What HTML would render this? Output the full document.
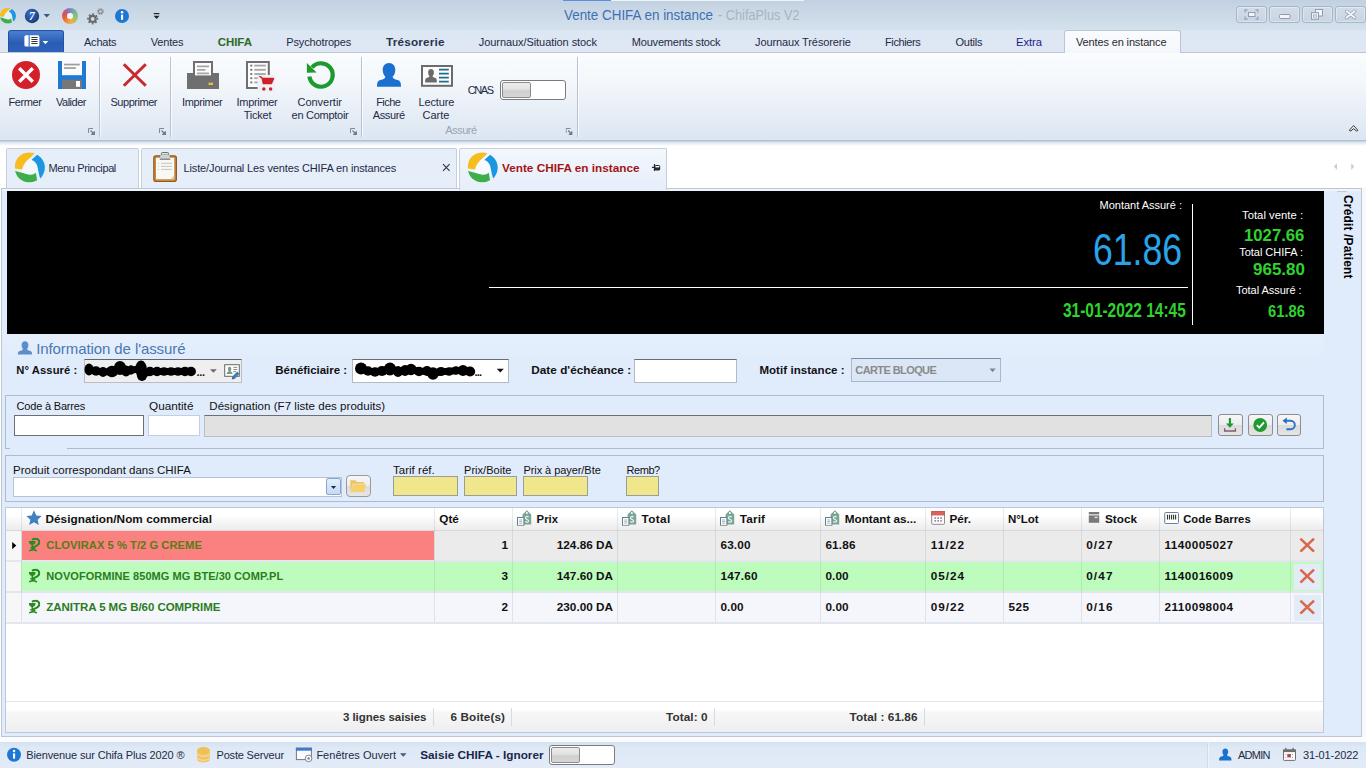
<!DOCTYPE html>
<html lang="fr"><head><meta charset="utf-8"><title>Vente CHIFA en instance - ChifaPlus V2</title>
<style>
html,body{margin:0;padding:0;}
body{width:1366px;height:768px;overflow:hidden;background:#fff;font-family:"Liberation Sans",sans-serif;}
#app{position:relative;width:1366px;height:768px;overflow:hidden;}
#app div{position:absolute;box-sizing:border-box;}
.t{position:absolute;white-space:nowrap;}
#ic{position:absolute;left:0;top:0;}

</style></head>
<body>
<div id="app">
<div class="" style="left:0px;top:0px;width:1366px;height:53px;background:linear-gradient(#c2d1e1 0,#cad8e6 12px,#d1dfeb 25px,#d3e0ec 29px,#dde6f3 31px,#dfe7f4 53px);"></div>
<div class="" style="left:563px;top:0px;width:241px;height:1px;background:#eef2f8;"></div>
<div class="" style="left:563px;top:0px;width:48px;height:1px;background:#5b8fd6;"></div>
<span class="t" style="left:564px;top:7px;font-size:14.75px;line-height:16px;color:#3f6fb3;transform-origin:0 0;transform:scaleX(0.909);">Vente CHIFA en instance</span>
<span class="t" style="left:717.5px;top:7px;font-size:14.75px;line-height:16px;color:#aab3c0;transform-origin:0 0;transform:scaleX(0.865);">- ChifaPlus V2</span>
<div class="" style="left:1236px;top:6px;width:31px;height:17px;border:1px solid #a7b5c9;border-radius:3px;background:linear-gradient(#d3dce9,#c9d4e3);box-shadow:inset 0 0 0 1px rgba(255,255,255,.35);"></div>
<div class="" style="left:1269px;top:6px;width:31px;height:17px;border:1px solid #a7b5c9;border-radius:3px;background:linear-gradient(#d3dce9,#c9d4e3);box-shadow:inset 0 0 0 1px rgba(255,255,255,.35);"></div>
<div class="" style="left:1302px;top:6px;width:31px;height:17px;border:1px solid #a7b5c9;border-radius:3px;background:linear-gradient(#d3dce9,#c9d4e3);box-shadow:inset 0 0 0 1px rgba(255,255,255,.35);"></div>
<div class="" style="left:1335px;top:6px;width:31px;height:17px;border:1px solid #a7b5c9;border-radius:3px;background:linear-gradient(#d3dce9,#c9d4e3);box-shadow:inset 0 0 0 1px rgba(255,255,255,.35);"></div>
<div class="" style="left:8px;top:30px;width:56px;height:23px;border-radius:3px 3px 0 0;background:linear-gradient(#4a7fd0,#2a5cb4 55%,#2f63bb);border:1px solid #2452a3;border-bottom:none;"></div>
<div class="" style="left:1064px;top:30px;width:117px;height:24px;border:1px solid #b9c6d8;border-bottom:none;border-radius:3px 3px 0 0;background:linear-gradient(#f9fbfe,#f4f7fc);"></div>
<span class="t" style="left:84.0px;top:36px;font-size:11.0px;line-height:12px;color:#1e2b45;letter-spacing:-0.23px;">Achats</span>
<span class="t" style="left:150.7px;top:36px;font-size:11.0px;line-height:12px;color:#1e2b45;letter-spacing:-0.17px;">Ventes</span>
<span class="t" style="left:217.8px;top:36px;font-size:11.5px;line-height:12px;color:#2c6b1c;font-weight:bold;letter-spacing:-0.08px;">CHIFA</span>
<span class="t" style="left:286.3px;top:36px;font-size:11.0px;line-height:12px;color:#1e2b45;letter-spacing:-0.15px;">Psychotropes</span>
<span class="t" style="left:386.0px;top:35px;font-size:11.75px;line-height:13px;color:#26344f;font-weight:bold;letter-spacing:0.19px;">Trésorerie</span>
<span class="t" style="left:478.8px;top:36px;font-size:11.0px;line-height:12px;color:#1e2b45;letter-spacing:-0.07px;">Journaux/Situation stock</span>
<span class="t" style="left:631.8px;top:36px;font-size:11.0px;line-height:12px;color:#1e2b45;letter-spacing:-0.2px;">Mouvements stock</span>
<span class="t" style="left:755.0px;top:36px;font-size:11.0px;line-height:12px;color:#1e2b45;letter-spacing:-0.11px;">Journaux Trésorerie</span>
<span class="t" style="left:885.0px;top:36px;font-size:11.0px;line-height:12px;color:#1e2b45;letter-spacing:-0.39px;">Fichiers</span>
<span class="t" style="left:955.5px;top:36px;font-size:11.0px;line-height:12px;color:#1e2b45;letter-spacing:-0.22px;">Outils</span>
<span class="t" style="left:1016.0px;top:36px;font-size:11.25px;line-height:12px;color:#1c1c8c;letter-spacing:-0.06px;">Extra</span>
<span class="t" style="left:1076.0px;top:36px;font-size:11.0px;line-height:12px;color:#2b2b2b;letter-spacing:-0.14px;">Ventes en instance</span>
<div class="" style="left:0px;top:53px;width:1366px;height:88px;background:linear-gradient(#fafcfe 0,#f3f7fb 30px,#e6edf6 62px,#dbe5f1 88px);"></div>
<div class="" style="left:0px;top:52px;width:1064px;height:1px;background:#b9c6d8;"></div>
<div class="" style="left:1181px;top:52px;width:185px;height:1px;background:#b9c6d8;"></div>
<div class="" style="left:0px;top:140px;width:1366px;height:1px;background:#b3c2d6;"></div>
<div class="" style="left:0px;top:141px;width:1366px;height:1px;background:#c3d0e0;"></div>
<div class="" style="left:0px;top:142px;width:1366px;height:4px;background:linear-gradient(#dbe4ef,#ffffff);"></div>
<div class="" style="left:99px;top:57px;width:1px;height:80px;background:#b7c3d4;"></div>
<div class="" style="left:100px;top:57px;width:1px;height:80px;background:rgba(255,255,255,.7);"></div>
<div class="" style="left:170px;top:57px;width:1px;height:80px;background:#b7c3d4;"></div>
<div class="" style="left:171px;top:57px;width:1px;height:80px;background:rgba(255,255,255,.7);"></div>
<div class="" style="left:361px;top:57px;width:1px;height:80px;background:#b7c3d4;"></div>
<div class="" style="left:362px;top:57px;width:1px;height:80px;background:rgba(255,255,255,.7);"></div>
<div class="" style="left:577px;top:57px;width:1px;height:80px;background:#b7c3d4;"></div>
<div class="" style="left:578px;top:57px;width:1px;height:80px;background:rgba(255,255,255,.7);"></div>
<span class="t" style="left:8.5px;top:96px;font-size:11.0px;line-height:12px;color:#1e2b45;letter-spacing:-0.39px;">Fermer</span>
<span class="t" style="left:56.0px;top:96px;font-size:11.0px;line-height:12px;color:#1e2b45;letter-spacing:-0.49px;">Valider</span>
<span class="t" style="left:110.5px;top:96px;font-size:11.0px;line-height:12px;color:#1e2b45;letter-spacing:-0.47px;">Supprimer</span>
<span class="t" style="left:182.0px;top:96px;font-size:11.0px;line-height:12px;color:#1e2b45;letter-spacing:-0.38px;">Imprimer</span>
<span class="t" style="left:236.6px;top:96px;font-size:11.0px;line-height:12px;color:#1e2b45;letter-spacing:-0.32px;">Imprimer</span>
<span class="t" style="left:243.8px;top:109px;font-size:11.0px;line-height:12px;color:#1e2b45;letter-spacing:-0.24px;">Ticket</span>
<span class="t" style="left:297.5px;top:96px;font-size:11.0px;line-height:12px;color:#1e2b45;letter-spacing:-0.02px;">Convertir</span>
<span class="t" style="left:291.6px;top:109px;font-size:11.0px;line-height:12px;color:#1e2b45;letter-spacing:-0.28px;">en Comptoir</span>
<span class="t" style="left:376.2px;top:96px;font-size:11.0px;line-height:12px;color:#1e2b45;letter-spacing:-0.54px;">Fiche</span>
<span class="t" style="left:372.8px;top:109px;font-size:11.0px;line-height:12px;color:#1e2b45;letter-spacing:-0.4px;">Assuré</span>
<span class="t" style="left:418.5px;top:96px;font-size:11.0px;line-height:12px;color:#1e2b45;letter-spacing:-0.13px;">Lecture</span>
<span class="t" style="left:422.5px;top:109px;font-size:11.0px;line-height:12px;color:#1e2b45;">Carte</span>
<span class="t" style="left:467.8px;top:84px;font-size:11.0px;line-height:12px;color:#1e2b45;letter-spacing:-1.44px;">CNAS</span>
<span class="t" style="left:445.2px;top:124px;font-size:11.0px;line-height:12px;color:#9aa4b3;letter-spacing:-0.45px;">Assuré</span>
<div class="" style="left:500px;top:80px;width:66px;height:20px;border:1px solid #7b7b7b;border-radius:3px;background:#fff;"></div>
<div class="" style="left:502px;top:82px;width:29px;height:16px;border:1px solid #8c8c8c;border-radius:2px;background:linear-gradient(#ececec,#e2e2e2 45%,#cfcfcf 55%,#d6d6d6);"></div>
<div class="" style="left:6px;top:148px;width:133px;height:41px;border:1px solid #c6ceda;border-bottom:none;border-radius:2px 2px 0 0;background:#e6eef9;"></div>
<div class="" style="left:141px;top:148px;width:316px;height:41px;border:1px solid #c6ceda;border-bottom:none;border-radius:2px 2px 0 0;background:#e6eef9;"></div>
<span class="t" style="left:48.5px;top:162px;font-size:11.0px;line-height:12px;color:#1e2b45;letter-spacing:-0.38px;">Menu Principal</span>
<span class="t" style="left:183.5px;top:162px;font-size:11.0px;line-height:12px;color:#1e2b45;letter-spacing:-0.13px;">Liste/Journal Les ventes CHIFA en instances</span>
<div class="" style="left:1px;top:188px;width:1361px;height:549px;border:1px solid #bec6d2;background:#e0ebfc;"></div>
<div class="" style="left:2px;top:189px;width:1359px;height:2px;background:#f0f5fd;"></div>
<div class="" style="left:1362px;top:188px;width:4px;height:549px;background:#f7f9fd;"></div>
<div class="" style="left:459px;top:148px;width:208px;height:42px;border:1px solid #c6ceda;border-bottom:none;border-radius:2px 2px 0 0;background:linear-gradient(#f3f7fd,#e6eefa);"></div>
<span class="t" style="left:502.0px;top:161px;font-size:11.75px;line-height:13px;color:#a31515;font-weight:bold;letter-spacing:0.01px;">Vente CHIFA en instance</span>
<div class="" style="left:7px;top:191px;width:1317px;height:143px;background:#000;"></div>
<div class="" style="left:489px;top:287px;width:699px;height:1px;background:#fff;"></div>
<div class="" style="left:1192px;top:204px;width:1px;height:121px;background:#fff;"></div>
<span class="t" style="left:1099.6px;top:199px;font-size:11.0px;line-height:12px;color:#fff;letter-spacing:-0.01px;">Montant Assuré :</span>
<span class="t" style="left:1242.0px;top:209px;font-size:11.25px;line-height:12px;color:#fff;letter-spacing:0.03px;">Total vente :</span>
<span class="t" style="left:1239.3px;top:246px;font-size:11.0px;line-height:12px;color:#fff;letter-spacing:-0.04px;">Total CHIFA :</span>
<span class="t" style="left:1236.0px;top:284px;font-size:11.0px;line-height:12px;color:#fff;letter-spacing:-0.03px;">Total Assuré :</span>
<span class="t" style="left:1093px;top:228.1px;font-size:43.65px;line-height:43.65px;color:#2aa4e8;transform-origin:0 0;transform:scaleX(0.815);">61.86</span>
<span class="t" style="left:1062.5px;top:301.2px;font-size:19.90px;line-height:19.90px;color:#2fd22f;font-weight:bold;transform-origin:0 0;transform:scaleX(0.776);">31-01-2022 14:45</span>
<span class="t" style="left:1244px;top:226.5px;font-size:17.18px;line-height:17.18px;color:#2fd22f;font-weight:bold;transform-origin:0 0;transform:scaleX(0.973);">1027.66</span>
<span class="t" style="left:1253.3px;top:261.8px;font-size:16.76px;line-height:16.76px;color:#2fd22f;font-weight:bold;transform-origin:0 0;transform:scaleX(1.015);">965.80</span>
<span class="t" style="left:1267.5px;top:303.5px;font-size:16.76px;line-height:16.76px;color:#2fd22f;font-weight:bold;transform-origin:0 0;transform:scaleX(0.880);">61.86</span>
<span class="t" style="left:1354px;top:195px;font-size:12px;line-height:12px;font-weight:bold;color:#000;letter-spacing:0.15px;transform-origin:0 0;transform:rotate(90deg);">Crédit /Patient</span>
<div class="" style="left:2px;top:334px;width:1322px;height:26px;background:linear-gradient(#e5effc,#e1ecfb);"></div>
<span class="t" style="left:36.2px;top:340px;font-size:15.0px;line-height:17px;color:#4a78b4;letter-spacing:-0.09px;">Information de l&#x27;assuré</span>
<span class="t" style="left:16.3px;top:364px;font-size:11.25px;line-height:12px;color:#111;font-weight:bold;letter-spacing:0.06px;">N° Assuré :</span>
<div class="" style="left:84px;top:359px;width:158px;height:24px;border:1px solid #bdbdbd;border-top-color:#5c6575;background:#efefef;"></div>
<span class="t" style="left:275.3px;top:364px;font-size:11.5px;line-height:12px;color:#111;font-weight:bold;letter-spacing:-0.04px;">Bénéficiaire :</span>
<div class="" style="left:352px;top:359px;width:157px;height:24px;border:1px solid #b3bac5;border-top-color:#666c78;background:#fff;"></div>
<span class="t" style="left:531.3px;top:363px;font-size:11.75px;line-height:13px;color:#111;font-weight:bold;letter-spacing:0.02px;">Date d&#x27;échéance :</span>
<div class="" style="left:634px;top:359px;width:103px;height:24px;border:1px solid #b3bac5;border-top-color:#666c78;background:#fff;"></div>
<span class="t" style="left:759.4px;top:364px;font-size:11.5px;line-height:12px;color:#111;font-weight:bold;letter-spacing:0.06px;">Motif instance :</span>
<div class="" style="left:851px;top:358px;width:150px;height:24px;border:1px solid #a9b8cc;border-top-color:#7f8da3;background:#dbe6f6;"></div>
<span class="t" style="left:855.3px;top:364px;font-size:11.0px;line-height:12px;color:#8a8a8a;font-weight:bold;letter-spacing:-0.59px;">CARTE BLOQUE</span>
<span class="t" style="left:196.5px;top:366px;font-size:11.0px;line-height:12px;color:#111;font-weight:bold;letter-spacing:-0.33px;">...</span>
<span class="t" style="left:474.5px;top:366px;font-size:11.0px;line-height:12px;color:#111;font-weight:bold;letter-spacing:-0.83px;">...</span>
<div class="" style="left:5px;top:395px;width:1319px;height:54px;border:1px solid #aebbcd;"></div>
<div class="" style="left:10px;top:448px;width:57px;height:1px;background:#e0ebfc;"></div>
<span class="t" style="left:16.5px;top:400px;font-size:11.0px;line-height:12px;color:#111;letter-spacing:-0.18px;">Code à Barres</span>
<span class="t" style="left:149.0px;top:399px;font-size:11.75px;line-height:13px;color:#111;">Quantité</span>
<span class="t" style="left:209.3px;top:400px;font-size:11.5px;line-height:12px;color:#111;letter-spacing:0.04px;">Désignation (F7 liste des produits)</span>
<div class="" style="left:14px;top:415px;width:130px;height:21px;border:1px solid #6f6f6f;background:#fff;"></div>
<div class="" style="left:148px;top:415px;width:52px;height:21px;border:1px solid #c3cfe0;background:#fff;"></div>
<div class="" style="left:204px;top:415px;width:1008px;height:22px;border:1px solid #bdbdbd;border-top:1px solid #6f6f6f;background:#e1e1e1;"></div>
<div class="" style="left:1218px;top:414px;width:25px;height:22px;border:1px solid #8e8e8e;border-radius:3px;background:linear-gradient(#f6f6f6,#ededed 50%,#dcdcdc 51%,#e4e4e4);"></div>
<div class="" style="left:1248px;top:414px;width:25px;height:22px;border:1px solid #8e8e8e;border-radius:3px;background:linear-gradient(#f6f6f6,#ededed 50%,#dcdcdc 51%,#e4e4e4);"></div>
<div class="" style="left:1277px;top:414px;width:24px;height:22px;border:1px solid #8e8e8e;border-radius:3px;background:linear-gradient(#f6f6f6,#ededed 50%,#dcdcdc 51%,#e4e4e4);"></div>
<div class="" style="left:5px;top:455px;width:1319px;height:47px;border:1px solid #aebbcd;"></div>
<span class="t" style="left:13.1px;top:464px;font-size:11.5px;line-height:12px;color:#111;letter-spacing:-0.02px;">Produit correspondant dans CHIFA</span>
<div class="" style="left:13px;top:477px;width:329px;height:20px;border:1px solid #b4c3d8;background:#fff;"></div>
<div class="" style="left:326px;top:478px;width:15px;height:17px;border:1px solid #86a6d3;border-radius:2px;background:linear-gradient(#e3eefc,#c5d9f5);"></div>
<div class="" style="left:346px;top:475px;width:25px;height:22px;border:1px solid #9a9a9a;border-radius:4px;background:linear-gradient(#f7f7f7,#ececec 50%,#dcdcdc 51%,#e6e6e6);"></div>
<span class="t" style="left:393.0px;top:464px;font-size:11.5px;line-height:12px;color:#111;letter-spacing:0.02px;">Tarif réf.</span>
<span class="t" style="left:464.0px;top:464px;font-size:11.0px;line-height:12px;color:#111;letter-spacing:0.04px;">Prix/Boite</span>
<span class="t" style="left:523.4px;top:464px;font-size:11.0px;line-height:12px;color:#111;letter-spacing:-0.06px;">Prix à payer/Bte</span>
<span class="t" style="left:626.5px;top:464px;font-size:11.0px;line-height:12px;color:#111;letter-spacing:-0.44px;">Remb?</span>
<div class="" style="left:393px;top:476px;width:65px;height:20px;border:1px solid #9c9c9c;background:#f0e68c;"></div>
<div class="" style="left:464px;top:476px;width:53px;height:20px;border:1px solid #9c9c9c;background:#f0e68c;"></div>
<div class="" style="left:523px;top:476px;width:65px;height:20px;border:1px solid #9c9c9c;background:#f0e68c;"></div>
<div class="" style="left:626px;top:476px;width:33px;height:20px;border:1px solid #9c9c9c;background:#f0e68c;"></div>
<div class="" style="left:5px;top:507px;width:1319px;height:226px;border:1px solid #bdc8d9;background:#fff;"></div>
<div class="" style="left:6px;top:508px;width:1317px;height:23px;background:linear-gradient(#ffffff 30%,#f4f4f4 70%,#ececec);border-bottom:1px solid #d9d9d9;"></div>
<div class="" style="left:6px;top:531px;width:1317px;height:29px;background:#ebebeb;"></div>
<div class="" style="left:22px;top:531px;width:412px;height:29px;background:#fb8181;"></div>
<div class="" style="left:6px;top:562px;width:1317px;height:29px;background:#bdfcbd;"></div>
<div class="" style="left:6px;top:593px;width:1317px;height:29px;background:#f5f5fc;"></div>
<div class="" style="left:6px;top:531px;width:15px;height:91px;background:#f7f7f7;"></div>
<div class="" style="left:6px;top:560px;width:1317px;height:2px;background:#e3e6ee;"></div>
<div class="" style="left:6px;top:591px;width:1317px;height:2px;background:#e3e6ee;"></div>
<div class="" style="left:6px;top:622px;width:1317px;height:2px;background:#e3e6ee;"></div>
<div class="" style="left:21px;top:508px;width:1px;height:114px;background:rgba(150,155,170,.22);"></div>
<div class="" style="left:434px;top:508px;width:1px;height:114px;background:rgba(150,155,170,.22);"></div>
<div class="" style="left:512px;top:508px;width:1px;height:114px;background:rgba(150,155,170,.22);"></div>
<div class="" style="left:617px;top:508px;width:1px;height:114px;background:rgba(150,155,170,.22);"></div>
<div class="" style="left:715px;top:508px;width:1px;height:114px;background:rgba(150,155,170,.22);"></div>
<div class="" style="left:820px;top:508px;width:1px;height:114px;background:rgba(150,155,170,.22);"></div>
<div class="" style="left:925px;top:508px;width:1px;height:114px;background:rgba(150,155,170,.22);"></div>
<div class="" style="left:1003px;top:508px;width:1px;height:114px;background:rgba(150,155,170,.22);"></div>
<div class="" style="left:1081px;top:508px;width:1px;height:114px;background:rgba(150,155,170,.22);"></div>
<div class="" style="left:1159px;top:508px;width:1px;height:114px;background:rgba(150,155,170,.22);"></div>
<div class="" style="left:1290px;top:508px;width:1px;height:114px;background:rgba(150,155,170,.22);"></div>
<div class="" style="left:1294px;top:564px;width:27px;height:26px;background:#e3ebf7;"></div>
<div class="" style="left:1294px;top:595px;width:27px;height:26px;background:#e3ebf7;"></div>
<span class="t" style="left:45.5px;top:512px;font-size:11.75px;line-height:13px;color:#111;font-weight:bold;letter-spacing:0.05px;">Désignation/Nom commercial</span>
<span class="t" style="left:439.3px;top:512px;font-size:11.75px;line-height:13px;color:#111;font-weight:bold;letter-spacing:-0.04px;">Qté</span>
<span class="t" style="left:536.6px;top:513px;font-size:11.25px;line-height:12px;color:#111;font-weight:bold;letter-spacing:0.05px;">Prix</span>
<span class="t" style="left:641.5px;top:512px;font-size:11.75px;line-height:13px;color:#111;font-weight:bold;letter-spacing:0.38px;">Total</span>
<span class="t" style="left:739.7px;top:512px;font-size:11.75px;line-height:13px;color:#111;font-weight:bold;letter-spacing:0.18px;">Tarif</span>
<span class="t" style="left:844.7px;top:512px;font-size:11.75px;line-height:13px;color:#111;font-weight:bold;letter-spacing:-0.01px;">Montant as...</span>
<span class="t" style="left:949.4px;top:512px;font-size:11.75px;line-height:13px;color:#111;font-weight:bold;letter-spacing:0.01px;">Pér.</span>
<span class="t" style="left:1008.0px;top:513px;font-size:11.5px;line-height:12px;color:#111;font-weight:bold;letter-spacing:-0.05px;">N°Lot</span>
<span class="t" style="left:1105.0px;top:512px;font-size:11.75px;line-height:13px;color:#111;font-weight:bold;">Stock</span>
<span class="t" style="left:1183.2px;top:513px;font-size:11.25px;line-height:12px;color:#111;font-weight:bold;letter-spacing:0.06px;">Code Barres</span>
<span class="t" style="left:46.3px;top:539px;font-size:11.25px;line-height:12px;color:#5c7a16;font-weight:bold;">CLOVIRAX 5 % T/2 G CREME</span>
<span class="t" style="left:501.5px;top:538px;font-size:11.75px;line-height:13px;color:#111;font-weight:bold;letter-spacing:-0.03px;">1</span>
<span class="t" style="left:556.8px;top:538px;font-size:11.75px;line-height:13px;color:#111;font-weight:bold;">124.86 DA</span>
<span class="t" style="left:720.4px;top:538px;font-size:11.75px;line-height:13px;color:#111;font-weight:bold;letter-spacing:0.2px;">63.00</span>
<span class="t" style="left:825.4px;top:538px;font-size:11.75px;line-height:13px;color:#111;font-weight:bold;letter-spacing:0.17px;">61.86</span>
<span class="t" style="left:930.7px;top:538px;font-size:11.75px;line-height:13px;color:#111;font-weight:bold;letter-spacing:1.14px;">11/22</span>
<span class="t" style="left:1086.2px;top:538px;font-size:11.75px;line-height:13px;color:#111;font-weight:bold;letter-spacing:1.14px;">0/27</span>
<span class="t" style="left:1164.5px;top:538px;font-size:11.75px;line-height:13px;color:#111;font-weight:bold;letter-spacing:0.42px;">1140005027</span>
<span class="t" style="left:46.3px;top:570px;font-size:11.0px;line-height:12px;color:#2a7d1c;font-weight:bold;letter-spacing:0.05px;">NOVOFORMINE 850MG MG BTE/30 COMP.PL</span>
<span class="t" style="left:501.5px;top:569px;font-size:11.75px;line-height:13px;color:#111;font-weight:bold;letter-spacing:-0.03px;">3</span>
<span class="t" style="left:556.8px;top:569px;font-size:11.75px;line-height:13px;color:#111;font-weight:bold;">147.60 DA</span>
<span class="t" style="left:720.4px;top:569px;font-size:11.75px;line-height:13px;color:#111;font-weight:bold;letter-spacing:0.23px;">147.60</span>
<span class="t" style="left:825.4px;top:569px;font-size:11.75px;line-height:13px;color:#111;font-weight:bold;letter-spacing:0.11px;">0.00</span>
<span class="t" style="left:930.7px;top:569px;font-size:11.75px;line-height:13px;color:#111;font-weight:bold;letter-spacing:0.97px;">05/24</span>
<span class="t" style="left:1086.2px;top:569px;font-size:11.75px;line-height:13px;color:#111;font-weight:bold;letter-spacing:1.14px;">0/47</span>
<span class="t" style="left:1164.5px;top:569px;font-size:11.75px;line-height:13px;color:#111;font-weight:bold;letter-spacing:0.42px;">1140016009</span>
<span class="t" style="left:46.3px;top:601px;font-size:11.5px;line-height:12px;color:#2a7d1c;font-weight:bold;letter-spacing:-0.05px;">ZANITRA 5 MG B/60 COMPRIME</span>
<span class="t" style="left:501.5px;top:600px;font-size:11.75px;line-height:13px;color:#111;font-weight:bold;letter-spacing:-0.03px;">2</span>
<span class="t" style="left:556.8px;top:600px;font-size:11.75px;line-height:13px;color:#111;font-weight:bold;">230.00 DA</span>
<span class="t" style="left:720.4px;top:600px;font-size:11.75px;line-height:13px;color:#111;font-weight:bold;letter-spacing:0.11px;">0.00</span>
<span class="t" style="left:825.4px;top:600px;font-size:11.75px;line-height:13px;color:#111;font-weight:bold;letter-spacing:0.11px;">0.00</span>
<span class="t" style="left:930.7px;top:600px;font-size:11.75px;line-height:13px;color:#111;font-weight:bold;letter-spacing:0.97px;">09/22</span>
<span class="t" style="left:1008.5px;top:600px;font-size:11.75px;line-height:13px;color:#111;font-weight:bold;letter-spacing:0.45px;">525</span>
<span class="t" style="left:1086.2px;top:600px;font-size:11.75px;line-height:13px;color:#111;font-weight:bold;letter-spacing:1.14px;">0/16</span>
<span class="t" style="left:1164.5px;top:600px;font-size:11.75px;line-height:13px;color:#111;font-weight:bold;letter-spacing:0.42px;">2110098004</span>
<div class="" style="left:6px;top:701px;width:1317px;height:31px;background:linear-gradient(#ffffff 0,#ffffff 24%,#f7f7f8 34%,#eeeef0 100%);border-top:1px solid #e2e4e8;"></div>
<div class="" style="left:433px;top:708px;width:1px;height:18px;background:#d5dae3;"></div>
<div class="" style="left:511px;top:708px;width:1px;height:18px;background:#d5dae3;"></div>
<div class="" style="left:714px;top:708px;width:1px;height:18px;background:#d5dae3;"></div>
<div class="" style="left:924px;top:708px;width:1px;height:18px;background:#d5dae3;"></div>
<span class="t" style="left:343.0px;top:711px;font-size:11.5px;line-height:12px;color:#333;font-weight:bold;letter-spacing:-0.06px;">3 lignes saisies</span>
<span class="t" style="left:450.5px;top:710px;font-size:11.75px;line-height:13px;color:#333;font-weight:bold;letter-spacing:0.11px;">6 Boite(s)</span>
<span class="t" style="left:666.0px;top:710px;font-size:11.75px;line-height:13px;color:#333;font-weight:bold;letter-spacing:0.09px;">Total: 0</span>
<span class="t" style="left:849.5px;top:710px;font-size:11.75px;line-height:13px;color:#333;font-weight:bold;letter-spacing:0.08px;">Total : 61.86</span>
<div class="" style="left:0px;top:737px;width:1366px;height:5px;background:#fafcfe;"></div>
<div class="" style="left:0px;top:742px;width:1366px;height:26px;background:linear-gradient(#d6e2f2,#dfe9f6 6px,#e2ebf7);"></div>
<span class="t" style="left:26.2px;top:749px;font-size:11.0px;line-height:12px;color:#1e2b45;letter-spacing:-0.13px;">Bienvenue sur Chifa Plus 2020 ®</span>
<span class="t" style="left:216.5px;top:749px;font-size:11.0px;line-height:12px;color:#1e2b45;letter-spacing:-0.18px;">Poste Serveur</span>
<span class="t" style="left:316.4px;top:749px;font-size:11.0px;line-height:12px;color:#1e2b45;letter-spacing:0.01px;">Fenêtres Ouvert</span>
<span class="t" style="left:420.2px;top:748px;font-size:11.75px;line-height:13px;color:#18274a;font-weight:bold;letter-spacing:0.02px;">Saisie CHIFA - Ignorer</span>
<span class="t" style="left:1238.0px;top:749px;font-size:11.0px;line-height:12px;color:#1e2b45;letter-spacing:-0.74px;">ADMIN</span>
<span class="t" style="left:1303.0px;top:749px;font-size:11.0px;line-height:12px;color:#1e2b45;letter-spacing:-0.11px;">31-01-2022</span>
<div class="" style="left:549px;top:745px;width:66px;height:20px;border:1px solid #7b7b7b;border-radius:3px;background:#fff;"></div>
<div class="" style="left:551px;top:747px;width:29px;height:16px;border:1px solid #8c8c8c;border-radius:2px;background:linear-gradient(#ececec,#e2e2e2 45%,#cfcfcf 55%,#d6d6d6);"></div>
<div style="left:62px;top:8px;width:16px;height:16px;border-radius:50%;background:conic-gradient(from 0deg,#6f8fc8 0deg,#7cbf84 70deg,#9cc06a 110deg,#f2b040 170deg,#ee8a38 215deg,#e0553a 270deg,#b0609a 330deg,#6f8fc8 360deg);"></div>
<div style="left:67.2px;top:13.2px;width:5.6px;height:5.6px;border-radius:50%;background:#f4f6fa;"></div>
<div class="" style="left:1207px;top:743px;width:1px;height:25px;background:#cfdaea;"></div>
<div class="" style="left:1208px;top:743px;width:1px;height:25px;background:#eef3fa;"></div>
<div class="" style="left:1337px;top:191px;width:10px;height:1px;background:#c3cad5;"></div>
<svg id="ic" width="1366" height="768" viewBox="0 0 1366 768">
<defs>
<symbol id="logo" viewBox="85 85 585 585">
<circle cx="372" cy="375" r="175" fill="#fff" opacity=".55"/>
<path fill="#f6bd1c" d="M95,395 C85,300 130,170 250,115 C330,80 420,85 470,100 C420,170 330,230 280,300 C250,345 240,380 235,415 Z"/>
<path fill="#1b97e2" d="M520,135 C600,180 665,270 668,370 C670,460 630,540 580,590 C560,540 545,450 520,340 C505,290 460,250 410,235 Z"/>
<path fill="#3eae4b" d="M100,445 C120,540 190,620 290,650 C380,675 460,655 520,620 L495,480 C460,510 420,525 370,515 C300,500 200,465 100,445 Z"/>
</symbol>
<radialGradient id="g7" cx="40%" cy="35%" r="70%"><stop offset="0" stop-color="#3a6fc4"/><stop offset="1" stop-color="#143878"/></radialGradient>
<linearGradient id="gring" x1="0" y1="0" x2="1" y2="1"><stop offset="0" stop-color="#7a6aa8"/><stop offset=".5" stop-color="#e0603a"/><stop offset="1" stop-color="#f2a83a"/></linearGradient>
<symbol id="launch" viewBox="0 0 7 7"><path d="M0.5,5 V0.5 H5" fill="none" stroke="#7f8a9c" stroke-width="1"/><path d="M2.5,2.5 L6,6 M6.3,3.2 V6.3 H3.2" fill="none" stroke="#6d788a" stroke-width="1.2"/><path d="M3.2,6.6 H6.6 V3.2 Z" fill="#6d788a"/></symbol>
<symbol id="tag" viewBox="0 0 16 16">
<path d="M6,4.6 L10.3,0.4 L14.6,4.6 V14.8 H6 Z" fill="#79a694"/>
<circle cx="10.3" cy="3.2" r="1" fill="#fff"/>
<path d="M12,7.3 C11,6.3 8.6,6.6 8.7,8.2 C8.8,9.8 12,9.3 12,11.1 C12,12.6 9.6,12.7 8.5,11.7" fill="none" stroke="#e4efe9" stroke-width="1.3"/>
<rect x="0.9" y="7.7" width="6.4" height="7.9" fill="#fff" stroke="#667f8f" stroke-width="1"/>
<path d="M2.6,10.2 H5.6 M2.6,11.8 H5.6 M2.6,13.4 H5.6" stroke="#8fa3b3" stroke-width="0.8"/>
</symbol>
<symbol id="cad" viewBox="0 0 12 15">
<path d="M4.3,1.6 C8.5,-0.6 12.3,2.6 10.6,6.2 C9.7,8.1 7.3,9 5.6,9.6" fill="none" stroke="#2b8a1f" stroke-width="2.2" stroke-linecap="round"/>
<path d="M0.3,3.4 H7.2 C7.2,6.6 5.2,7.6 3.8,7.6 C2.4,7.6 0.3,6.6 0.3,3.4 Z" fill="#2b8a1f"/>
<path d="M3.8,7 V13" stroke="#2b8a1f" stroke-width="1.6"/>
<path d="M1.2,13.3 C3,12.3 6,12.3 8,13.3" fill="none" stroke="#2b8a1f" stroke-width="1.7" stroke-linecap="round"/>
<path d="M2,10.3 L6.5,11.3" stroke="#2b8a1f" stroke-width="1.3" stroke-linecap="round"/>
</symbol>
<symbol id="delx" viewBox="0 0 16 15"><path d="M1.2,1 L14.8,14 M14.8,1 L1.2,14" stroke="#d9684c" stroke-width="2.6" stroke-linecap="butt" fill="none"/></symbol>
</defs>
<use href="#logo" x="-0.2" y="7.6" width="16.2" height="16.2"/>
<circle cx="32" cy="16" r="7.2" fill="url(#g7)"/>
<text x="31.8" y="20" font-family="Liberation Serif,serif" font-style="italic" font-weight="bold" font-size="11.5" fill="#fff" text-anchor="middle">7</text>
<path d="M43.5,14 H50 L46.75,17.5 Z" fill="#3c5682"/>
<circle cx="92.7" cy="18.9" r="3" fill="none" stroke="#6b6b6b" stroke-width="2.1"/><circle cx="92.7" cy="18.9" r="4.7" fill="none" stroke="#6b6b6b" stroke-width="1.7" stroke-dasharray="1.75 1.94" transform="rotate(-12 92.7 18.9)"/>
<circle cx="100.4" cy="11.5" r="1.9" fill="none" stroke="#8c8c8c" stroke-width="1.3"/><circle cx="100.4" cy="11.5" r="2.9" fill="none" stroke="#8c8c8c" stroke-width="1.1" stroke-dasharray="1.05 1.228"/>
<circle cx="122" cy="16" r="7" fill="#1c78d4"/>
<rect x="121" y="14.6" width="2.1" height="5.2" fill="#fff"/><circle cx="122.05" cy="12.3" r="1.25" fill="#fff"/>
<rect x="153.8" y="13" width="5.6" height="1.2" fill="#222"/><path d="M153.6,15.7 H159.6 L156.6,18.9 Z" fill="#222"/>
<rect x="24.4" y="35.3" width="15" height="11.3" rx="1.6" fill="#fff"/>
<rect x="28.6" y="35.3" width="1.1" height="11.3" fill="#2f62ba"/>
<path d="M31.4,37.5 H37.6 M31.4,39.5 H37.6 M31.4,41.5 H37.6 M31.4,43.5 H37.6" stroke="#333" stroke-width="1"/>
<path d="M42.5,41 H48.3 L45.4,44.2 Z" fill="#fff"/>
<rect x="1248.5" y="12.5" width="6.5" height="4" fill="#f2f5f9" stroke="#8f9bb0" stroke-width="1"/>
<path d="M1245,12.5 V10 H1247.5 M1255.5,10 H1258 V12.5 M1258,16.5 V19 H1255.5 M1247.5,19 H1245 V16.500" fill="none" stroke="#9aa6ba" stroke-width="1.3"/>
<rect x="1279.5" y="14.5" width="10.5" height="4" rx="1" fill="#f2f5f9" stroke="#8f9bb0" stroke-width="1"/>
<rect x="1315.5" y="9.5" width="7" height="6.5" fill="#f2f5f9" stroke="#8f9bb0" stroke-width="1"/>
<rect x="1311.5" y="12.7" width="7" height="6.5" fill="#f2f5f9" stroke="#8f9bb0" stroke-width="1"/><rect x="1313.5" y="15" width="3" height="2.2" fill="none" stroke="#9aa6ba" stroke-width="0.8"/>
<path d="M1346.6,11.3 L1354.6,17.6 M1354.6,11.3 L1346.6,17.6" stroke="#97a3b8" stroke-width="3.6" stroke-linecap="round"/>
<path d="M1346.6,11.3 L1354.6,17.6 M1354.6,11.3 L1346.6,17.6" stroke="#f4f6fa" stroke-width="1.9" stroke-linecap="round"/>
<circle cx="26" cy="75" r="14" fill="#d4202a"/>
<path d="M19.2,68.2 L32.8,81.8 M32.8,68.2 L19.2,81.800" stroke="#fff" stroke-width="3.4"/>
<rect x="58" y="61" width="28" height="28" fill="#1f78d1"/>
<rect x="62" y="61" width="20" height="14.2" fill="#fbfbfb"/>
<rect x="64" y="63.7" width="15.8" height="1.7" fill="#9d9d9d"/><rect x="64" y="67.2" width="11.8" height="1.7" fill="#9d9d9d"/>
<rect x="62" y="79.7" width="20" height="9.3" fill="#777"/><rect x="76" y="81" width="4" height="5.8" fill="#fff"/>
<path d="M123.8,64.2 L145.8,85.800 M145.8,64.2 L123.8,85.800" stroke="#c8282f" stroke-width="3" />
<rect x="187" y="73" width="32" height="16" fill="#6f6f6f"/>
<rect x="194" y="62" width="18" height="14.400" fill="#fcfcfc" stroke="#6f6f6f" stroke-width="2"/>
<path d="M197,66.3 H209 M197,69.8 H205.5 M197,73.3 H209" stroke="#a5a5a5" stroke-width="1.7"/>
<rect x="208.5" y="82.6" width="4.6" height="2.4" fill="#e9b84a"/>
<rect x="247" y="62" width="21.800" height="26" fill="#fcfcfc" stroke="#6f6f6f" stroke-width="2"/>
<rect x="250.3" y="64.69999999999999" width="2" height="1.8" fill="#6f6f6f"/><rect x="254.3" y="64.69999999999999" width="11.5" height="1.8" fill="#a5a5a5"/>
<rect x="250.3" y="68.89999999999999" width="2" height="1.8" fill="#6f6f6f"/><rect x="254.3" y="68.89999999999999" width="11.5" height="1.8" fill="#a5a5a5"/>
<rect x="250.3" y="73.1" width="2" height="1.8" fill="#6f6f6f"/><rect x="254.3" y="73.1" width="11.5" height="1.8" fill="#a5a5a5"/>
<rect x="250.3" y="77.3" width="2" height="1.8" fill="#6f6f6f"/><rect x="254.3" y="77.3" width="4.0" height="1.8" fill="#a5a5a5"/>
<rect x="250.3" y="81.5" width="2" height="1.8" fill="#6f6f6f"/><rect x="254.3" y="81.5" width="4.0" height="1.8" fill="#a5a5a5"/>
<rect x="257.6" y="75" width="17.5" height="17.5" fill="#edf2f9"/>
<path d="M259.6,76.4 L261.800,77.2 L263.2,83.6 H271.6 L273.800,78.4 H262.2 Z" fill="#d0212b" stroke="#d0212b" stroke-width="1.1" stroke-linejoin="round"/>
<circle cx="263.800" cy="89" r="1.75" fill="#d0212b"/><circle cx="270.6" cy="89" r="1.75" fill="#d0212b"/>
<path d="M312,67.5 A11.7,11.7 0 1 1 309.4,76.5" fill="none" stroke="#1c9a2e" stroke-width="4.2"/>
<path d="M306.9,63.1 V72.75 L316.6,72.5 Z" fill="#1c9a2e"/>
<path d="M389,63 C393,63 395.300,66 395.300,70 C395.300,73.500 393.800,75.600 392.600,76.700 C392.700,78.300 394.500,79.100 397.500,80.100 C400.300,81 401,82.500 401,86.800 H377 C377,82.500 377.700,81 380.500,80.100 C383.500,79.100 385.300,78.300 385.400,76.700 C384.200,75.600 382.700,73.500 382.700,70 C382.700,66 385,63 389,63 Z" fill="#1a70cf"/>
<rect x="422" y="66" width="30" height="19.800" fill="#fcfcfc" stroke="#6b6b6b" stroke-width="2"/>
<path d="M431,69 C432.900,69 433.900,70.500 433.900,72.500 C433.900,74.300 433.200,75.300 432.600,75.900 C432.700,76.900 433.600,77.300 435,77.800 C436.500,78.300 436.900,79.300 436.900,82.600 H425.100 C425.100,79.300 425.500,78.300 427,77.800 C428.400,77.300 429.300,76.900 429.400,75.900 C428.800,75.300 428.100,74.300 428.100,72.500 C428.100,70.500 429.100,69 431,69 Z" fill="#6b6b6b"/>
<path d="M439,69.700 H448.800 M439,73.700 H448.800 M439,77.700 H448.800 M439,81.700 H448.800" stroke="#1f6c8c" stroke-width="1.7"/>
<use href="#launch" x="88" y="128" width="7" height="7"/>
<use href="#launch" x="159" y="128" width="7" height="7"/>
<use href="#launch" x="350" y="128" width="7" height="7"/>
<use href="#launch" x="565.6" y="128" width="7" height="7"/>
<path d="M1349.600,130 L1353.600,125.600 L1357.600,130 C1358.200,130.800 1357,131.400 1356.200,130.800 L1353.600,128.600 L1351,130.800 C1350.200,131.400 1349,130.800 1349.600,130 Z" fill="#fff" stroke="#1c1c1c" stroke-width="0.9" stroke-linejoin="round"/>
<use href="#logo" x="14.4" y="152.2" width="30.6" height="30.6"/>
<use href="#logo" x="467.3" y="152.2" width="30.6" height="30.6"/>
<rect x="153.800" y="155.800" width="22.600" height="25.700" rx="2.200" fill="#c98a3e" stroke="#8f5a22" stroke-width="1.200"/>
<rect x="156" y="157.800" width="18.200" height="21.400" fill="#f9f8f5"/>
<path d="M170.600,179.200 L174.200,175.600 V179.200 Z" fill="#e0c9a8"/>
<path d="M161,163.300 H172 M161,166.400 H172 M161,169.400 H172" stroke="#bdbdbd" stroke-width="0.900"/><path d="M158.200,163.300 H159 M158.200,166.400 H159 M158.200,169.400 H159" stroke="#aaa" stroke-width="0.900"/>
<rect x="161.300" y="152.500" width="7.300" height="2.600" rx="1.200" fill="#dfe4e2" stroke="#55635f" stroke-width="0.900"/>
<path d="M160.600,154.900 H169.400 L170.400,159 C170.400,159.800 159.600,159.800 159.600,159 Z" fill="#cfd2d1"/><path d="M159.800,159.200 H170.200" stroke="#5f6b68" stroke-width="1"/>
<path d="M443,164.200 L449.600,170.800 M449.600,164.200 L443,170.800" stroke="#3a3a3a" stroke-width="1.2"/>
<path d="M652,167.4 H654.5 M654.5,164.1 V171" stroke="#2a2a2a" stroke-width="1.2" fill="none"/><rect x="655" y="165.5" width="4.7" height="4.4" rx="0.8" fill="#fff" stroke="#2a2a2a" stroke-width="1"/><rect x="654.8" y="167.4" width="5.2" height="2.8" fill="#2a2a2a"/>
<path d="M1337,163.200 V170 L1333.800,166.600 Z" fill="#cfcfcf"/><path d="M1351.200,163.200 V170 L1354.400,166.600 Z" fill="#cfcfcf"/>
<path d="M25,341.300 C27.200,341.300 28.400,343 28.400,345.200 C28.400,347.100 27.600,348.300 27,348.900 C27.100,349.800 28,350.200 29.700,350.800 C31.600,351.400 32.100,352.300 32.100,354.600 H17.900 C17.900,352.300 18.400,351.400 20.300,350.800 C22,350.200 22.900,349.800 23,348.900 C22.400,348.300 21.600,347.100 21.600,345.200 C21.600,343 22.800,341.300 25,341.300 Z" fill="#5b8fc9"/>
<path d="M210,369.300 H216.800 L213.400,372.700 Z" fill="#6a6a6a"/>
<rect x="224.700" y="364.700" width="14.600" height="11.600" fill="#fff" stroke="#666" stroke-width="1"/>
<path d="M229.600,366.800 C230.700,366.800 231.300,367.700 231.300,368.900 C231.300,370 230.800,370.600 230.500,370.900 C230.600,371.500 232.600,371.700 232.600,374 H226.600 C226.600,371.700 228.600,371.500 228.700,370.900 C228.400,370.600 227.900,370 227.900,368.900 C227.900,367.700 228.500,366.800 229.600,366.800 Z" fill="#7a9c88"/>
<path d="M233.400,367.400 H237.200 M233.400,369.500 H237.200 M233.400,371.600 H236" stroke="#7a7a7a" stroke-width="0.9"/>
<path d="M238.300,372.600 L233.200,378.100" stroke="#3a7cba" stroke-width="3.1"/><path d="M232.400,376.800 L234.400,378.800 L231.800,379.500 Z" fill="#2c5f96"/>
<path d="M89,369.5 L96,371 L103,372 L112,371.5 L120,368 L126,371 L131,370 L141,369 L142,375 L150,371.5 L157,371.5 L164,371.5 L171,371.5 L178,371.5 L185,371.5 L191,371.5" fill="none" stroke="#000" stroke-width="7" stroke-linecap="round" stroke-linejoin="round"/>
<ellipse cx="89" cy="369.5" rx="4.5" ry="6.1" fill="#000"/>
<ellipse cx="96" cy="371" rx="5.0" ry="4.7" fill="#000"/>
<ellipse cx="103" cy="372" rx="4.4" ry="5.1" fill="#000"/>
<ellipse cx="112" cy="371.5" rx="6.2" ry="5.7" fill="#000"/>
<ellipse cx="120" cy="368" rx="6.2" ry="7.0" fill="#000"/>
<ellipse cx="126" cy="371" rx="5.0" ry="5.4" fill="#000"/>
<ellipse cx="131" cy="370" rx="3.8" ry="4.7" fill="#000"/>
<ellipse cx="141" cy="369" rx="5.8" ry="8.4" fill="#000"/>
<ellipse cx="142" cy="375" rx="5.2" ry="6.1" fill="#000"/>
<ellipse cx="150" cy="371.5" rx="5.0" ry="4.7" fill="#000"/>
<ellipse cx="157" cy="371.5" rx="5.0" ry="4.7" fill="#000"/>
<ellipse cx="164" cy="371.5" rx="5.0" ry="4.3" fill="#000"/>
<ellipse cx="171" cy="371.5" rx="5.0" ry="4.3" fill="#000"/>
<ellipse cx="178" cy="371.5" rx="5.0" ry="4.3" fill="#000"/>
<ellipse cx="185" cy="371.5" rx="5.2" ry="4.7" fill="#000"/>
<ellipse cx="191" cy="371.5" rx="5.0" ry="4.7" fill="#000"/>
<path d="M361,368.5 L368,371 L375,372 L382,371 L390,369 L398,371.5 L405,370.5 L411,369.5 L419,371.5 L427,371 L433,373.5 L441,371.5 L449,371.5 L456,370.5 L463,370.5 L470,371.5" fill="none" stroke="#000" stroke-width="7" stroke-linecap="round" stroke-linejoin="round"/>
<ellipse cx="361" cy="368.5" rx="6.0" ry="6.1" fill="#000"/>
<ellipse cx="368" cy="371" rx="5.0" ry="4.7" fill="#000"/>
<ellipse cx="375" cy="372" rx="5.0" ry="4.7" fill="#000"/>
<ellipse cx="382" cy="371" rx="5.6" ry="5.1" fill="#000"/>
<ellipse cx="390" cy="369" rx="6.2" ry="6.5" fill="#000"/>
<ellipse cx="398" cy="371.5" rx="5.0" ry="5.4" fill="#000"/>
<ellipse cx="405" cy="370.5" rx="5.2" ry="5.4" fill="#000"/>
<ellipse cx="411" cy="369.5" rx="5.6" ry="5.7" fill="#000"/>
<ellipse cx="419" cy="371.5" rx="5.0" ry="4.7" fill="#000"/>
<ellipse cx="427" cy="371" rx="5.0" ry="4.9" fill="#000"/>
<ellipse cx="433" cy="373.5" rx="5.8" ry="6.2" fill="#000"/>
<ellipse cx="441" cy="371.5" rx="5.0" ry="4.6" fill="#000"/>
<ellipse cx="449" cy="371.5" rx="4.5" ry="4.3" fill="#000"/>
<ellipse cx="456" cy="370.5" rx="4.4" ry="4.3" fill="#000"/>
<ellipse cx="463" cy="370.5" rx="5.6" ry="5.4" fill="#000"/>
<ellipse cx="470" cy="371.5" rx="5.2" ry="5.1" fill="#000"/>
<path d="M496.800,368.800 H503.800 L500.300,372.600 Z" fill="#111"/>
<path d="M989.500,368.600 H995.700 L992.600,372.200 Z" fill="#7d8694"/>
<path d="M1229.900,418 V425" stroke="#1f9632" stroke-width="2.1"/><path d="M1226,423.400 H1233.800 L1229.900,427.800 Z" fill="#1f9632"/>
<path d="M1224.600,428.200 V431 H1235.400 V428.200" fill="none" stroke="#7c5c6c" stroke-width="1.3"/>
<circle cx="1260.200" cy="425" r="6.900" fill="#1f9a30"/><path d="M1256.800,425.200 L1259.300,427.700 L1264,422.400" fill="none" stroke="#fff" stroke-width="1.900"/>
<path d="M1285.600,420.800 H1290.600 C1296.200,420.800 1296.200,429.200 1290.600,429.200 H1286.400" fill="none" stroke="#2a72c0" stroke-width="1.900"/><path d="M1286.800,417.600 V424 L1282.400,420.800 Z" fill="#2a72c0"/>
<path d="M330.900,486 H336.100 L333.500,489 Z" fill="#1a2c55"/>
<path d="M350.200,480.200 H355.600 L356.600,482 H364.200 V483.800 H352.600 L350.600,491.600 Z" fill="#eec468"/><path d="M352.900,484.200 H366 L364.200,492 H350.400 Z" fill="#f6cf6e"/>
<path d="M34,510.300 L36.300,515.500 L41.600,516 L37.600,519.700 L38.800,525 L34,522.200 L29.200,525 L30.400,519.700 L26.400,516 L31.700,515.500 Z" fill="#417fc1"/>
<use href="#tag" x="516.6" y="509.8" width="16" height="16"/>
<use href="#tag" x="621.6" y="509.8" width="16" height="16"/>
<use href="#tag" x="719.6" y="509.8" width="16" height="16"/>
<use href="#tag" x="824.6" y="509.8" width="16" height="16"/>
<rect x="931.700" y="511.500" width="12.800" height="12.800" rx="1" fill="#fff" stroke="#8c8c96" stroke-width="1"/><rect x="931.700" y="511.500" width="12.800" height="3.400" fill="#d9635a" stroke="#c9584f" stroke-width="1"/>
<rect x="934.4" y="517.3" width="1.700" height="1.600" fill="#7a8ab5"/>
<rect x="934.4" y="520.1" width="1.700" height="1.600" fill="#c96a8a"/>
<rect x="937.3" y="517.3" width="1.700" height="1.600" fill="#c96a8a"/>
<rect x="937.3" y="520.1" width="1.700" height="1.600" fill="#7a8ab5"/>
<rect x="940.2" y="517.3" width="1.700" height="1.600" fill="#7a8ab5"/>
<rect x="940.2" y="520.1" width="1.700" height="1.600" fill="#c96a8a"/>
<rect x="1088.800" y="512" width="10.400" height="2.400" fill="#7a7a7a"/><rect x="1088.800" y="515.400" width="10.400" height="7.400" fill="#7a7a7a"/><rect x="1094.600" y="516.800" width="3" height="1.300" fill="#e8e8e8"/>
<rect x="1164.700" y="512.500" width="13.800" height="11" rx="1" fill="#fdfdfd" stroke="#6e7f99" stroke-width="1"/>
<path d="M1167.500,514.800 V519.600 M1169.500,514.800 V519.600 M1171.600,514.800 V519.600 M1173.600,514.800 V519.600 M1175.600,514.800 V519.600" stroke="#333" stroke-width="1.100"/>
<path d="M12.200,542 V549.200 L16.300,545.600 Z" fill="#000"/>
<use href="#cad" x="28.6" y="537.8" width="11.6" height="14.5"/>
<use href="#delx" x="1299.2" y="537.6" width="16" height="15"/>
<use href="#cad" x="28.6" y="568.8" width="11.6" height="14.5"/>
<use href="#delx" x="1299.2" y="568.6" width="16" height="15"/>
<use href="#cad" x="28.6" y="599.8" width="11.6" height="14.5"/>
<use href="#delx" x="1299.2" y="599.6" width="16" height="15"/>
<circle cx="14" cy="754.800" r="7" fill="#1c78d4"/><rect x="13" y="753.400" width="2.100" height="5.200" fill="#fff"/><circle cx="14.050" cy="751.100" r="1.250" fill="#fff"/>
<path d="M197.200,750.200 V759.600 C197.200,763.400 209.800,763.400 209.800,759.600 V750.200 Z" fill="#f0c465"/><ellipse cx="203.500" cy="750.200" rx="6.300" ry="3.100" fill="#f2c052"/>
<path d="M197.200,753.800 C198.500,757 208.500,757 209.800,753.800 M197.200,757.900 C198.500,761.100 208.500,761.100 209.800,757.900" fill="none" stroke="#f9e3aa" stroke-width="1"/>
<rect x="296.400" y="748.200" width="15" height="11.400" fill="#fdfdfd" stroke="#70798a" stroke-width="1"/><rect x="295.900" y="747.700" width="16" height="3" fill="#3d7bc9"/>
<circle cx="308.600" cy="758.400" r="3.300" fill="#fdfdfd" stroke="#70798a" stroke-width="0.900"/><circle cx="308.600" cy="758.400" r="1.200" fill="#70798a"/>
<path d="M400,753.200 H406.600 L403.300,756.800 Z" fill="#4a5a78"/>
<path d="M1225.300,748.400 C1227.200,748.400 1228.200,749.900 1228.200,751.800 C1228.200,753.400 1227.500,754.400 1227,754.900 C1227.100,755.700 1227.900,756 1229.400,756.500 C1231,757 1231.500,757.800 1231.500,760.400 H1219.100 C1219.100,757.800 1219.600,757 1221.200,756.500 C1222.700,756 1223.500,755.700 1223.600,754.900 C1223.100,754.400 1222.400,753.400 1222.400,751.800 C1222.400,749.900 1223.400,748.400 1225.300,748.400 Z" fill="#1a70cf"/>
<rect x="1283.500" y="750" width="12" height="10.400" rx="0.800" fill="#fdfdfd" stroke="#6e6e6e" stroke-width="1"/><rect x="1283" y="749.500" width="13" height="2.600" fill="#6e6e6e"/><rect x="1285.200" y="747.800" width="1.300" height="2.600" fill="#6e6e6e"/><rect x="1292.500" y="747.800" width="1.300" height="2.600" fill="#6e6e6e"/>
<rect x="1287.300" y="754" width="3.600" height="3.400" fill="#b8434a"/>
<path d="M1285.400,754.600 H1286.400 M1292,754.600 H1293 M1285.400,757.400 H1286.400 M1292,757.400 H1293" stroke="#999" stroke-width="1"/>
</svg>

</div>
</body></html>
